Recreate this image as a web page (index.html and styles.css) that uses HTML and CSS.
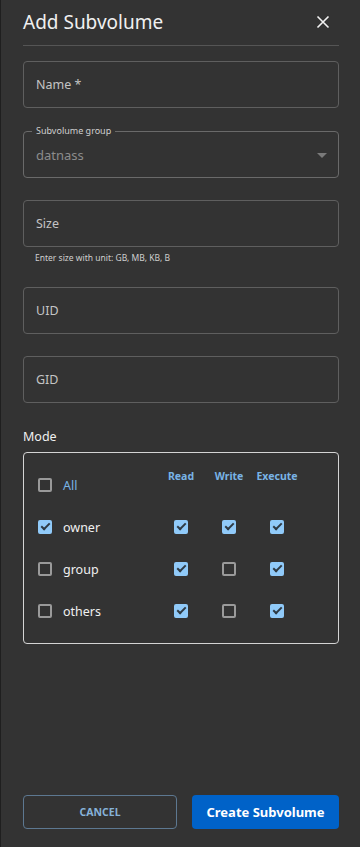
FILE: index.html
```html
<!DOCTYPE html>
<html>
<head>
<meta charset="utf-8">
<link rel="stylesheet" href="styles.css">
</head>
<body>
<div class="dialog">
  <div class="header">
    <h1 class="title">Add Subvolume</h1>
    <svg class="close" width="14" height="14" viewBox="0 0 14 14"><path d="M1.5 1.5 L12.5 12.5 M12.5 1.5 L1.5 12.5" stroke="#f2f2f2" stroke-width="1.6" fill="none"/></svg>
  </div>
  <div class="divider"></div>

  <div class="field f-name"><span class="ph">Name *</span></div>

  <div class="field f-group">
    <span class="legend">Subvolume group</span>
    <span class="value">datnass</span>
    <svg class="arrow" width="10" height="5" viewBox="0 0 10 5"><path d="M0 0 L10 0 L5 5 Z" fill="#7a7a7a"/></svg>
  </div>

  <div class="field f-size"><span class="ph">Size</span></div>
  <div class="helper">Enter size with unit: GB, MB, KB, B</div>

  <div class="field f-uid"><span class="ph">UID</span></div>
  <div class="field f-gid"><span class="ph">GID</span></div>

  <div class="mode-label">Mode</div>
  <div class="mode-box">
    <div class="row">
      <div class="who"><span class="cb"></span><span class="all">All</span></div>
      <div class="col-h">Read</div>
      <div class="col-h">Write</div>
      <div class="col-h">Execute</div>
    </div>
    <div class="row">
      <div class="who"><span class="cb on"></span><span class="name">owner</span></div>
      <div class="cell"><span class="cb on"></span></div>
      <div class="cell"><span class="cb on"></span></div>
      <div class="cell"><span class="cb on"></span></div>
    </div>
    <div class="row">
      <div class="who"><span class="cb"></span><span class="name">group</span></div>
      <div class="cell"><span class="cb on"></span></div>
      <div class="cell"><span class="cb"></span></div>
      <div class="cell"><span class="cb on"></span></div>
    </div>
    <div class="row">
      <div class="who"><span class="cb"></span><span class="name">others</span></div>
      <div class="cell"><span class="cb on"></span></div>
      <div class="cell"><span class="cb"></span></div>
      <div class="cell"><span class="cb on"></span></div>
    </div>
  </div>

  <div class="footer">
    <button class="btn cancel">CANCEL</button>
    <button class="btn create">Create Subvolume</button>
  </div>
</div>
</body>
</html>
```
FILE: styles.css
```css
html, body {
  margin: 0;
  padding: 0;
  background: #333333;
}
body {
  font-family: "Noto Sans", "Open Sans", sans-serif;
  color: #e6e6e6;
}
.dialog {
  box-sizing: border-box;
  width: 360px;
  height: 847px;
  padding: 0 21px 18px 22px;
  border-left: 1px solid #1f1f1f;
  display: flex;
  flex-direction: column;
}
.header {
  height: 45px;
  display: flex;
  align-items: center;
  justify-content: space-between;
}
.title {
  margin: 0;
  font-size: 19px;
  font-weight: 400;
  color: #f0f0f0;
  line-height: 24px;
  margin-top: -2px;
}
.close {
  margin-right: 9px;
  margin-top: -2px;
}
.divider {
  height: 1px;
  background: #555555;
}
.field {
  position: relative;
  box-sizing: border-box;
  height: 47px;
  border: 1px solid #5f5f5f;
  border-radius: 4px;
  display: flex;
  align-items: center;
  padding-left: 12px;
}
.f-name { margin-top: 15px; }
.f-group { margin-top: 23px; border-color: #6a6a6a; }
.f-size { margin-top: 22px; }
.f-uid { margin-top: 23px; }
.f-gid { margin-top: 22px; }
.ph {
  font-size: 12.5px;
  color: #c4c4c4;
}
.value {
  font-size: 13px;
  color: #8c8c8c;
}
.legend {
  position: absolute;
  top: -7px;
  left: 8px;
  padding: 0 4px;
  background: #333333;
  font-size: 9px;
  line-height: 12px;
  color: #cfcfcf;
}
.arrow {
  position: absolute;
  right: 11px;
  top: 21px;
}
.helper {
  margin-top: 5px;
  padding-left: 12px;
  font-size: 8.5px;
  color: #cfcfcf;
  line-height: 12px;
}
.mode-label {
  margin-top: 24px;
  font-size: 12.5px;
  color: #f0f0f0;
  line-height: 20px;
}
.mode-box {
  margin-top: 5px;
  box-sizing: border-box;
  border: 1px solid #d4d4d4;
  border-radius: 4px;
  padding: 11px 37px 11px 14px;
}
.row {
  display: grid;
  grid-template-columns: 1fr 48px 48px 48px;
  height: 42px;
  align-items: center;
}
.who {
  display: flex;
  align-items: center;
  gap: 11px;
}
.cell {
  display: flex;
  justify-content: center;
}
.col-h {
  align-self: start;
  margin-top: 4px;
  text-align: center;
  font-size: 10.5px;
  font-weight: 700;
  color: #79b3e6;
  line-height: 16px;
}
.all {
  font-size: 12.5px;
  color: #79b3e6;
}
.name {
  font-size: 12.5px;
  color: #f0f0f0;
}
.cb {
  box-sizing: border-box;
  width: 14px;
  height: 14px;
  border: 2px solid #9a9a9a;
  border-radius: 2px;
  display: inline-block;
  position: relative;
}
.cb.on {
  background: #90caf9;
  border-color: #90caf9;
}
.cb.on::after {
  content: "";
  position: absolute;
  left: 1px;
  top: 1px;
  width: 7px;
  height: 3px;
  border-left: 2px solid #2e3a44;
  border-bottom: 2px solid #2e3a44;
  transform: rotate(-45deg);
  transform-origin: center;
}
.footer {
  margin-top: auto;
  display: flex;
  gap: 15px;
}
.btn {
  box-sizing: border-box;
  height: 34px;
  border-radius: 4px;
  font-family: "Noto Sans", "Open Sans", sans-serif;
  font-weight: 700;
  cursor: pointer;
}
.cancel {
  width: 154px;
  background: transparent;
  border: 1px solid #5d7891;
  color: #86b2d8;
  font-size: 10.5px;
}
.create {
  flex: 1;
  background: #0062c8;
  border: none;
  color: #ffffff;
  font-size: 13px;
}
```
